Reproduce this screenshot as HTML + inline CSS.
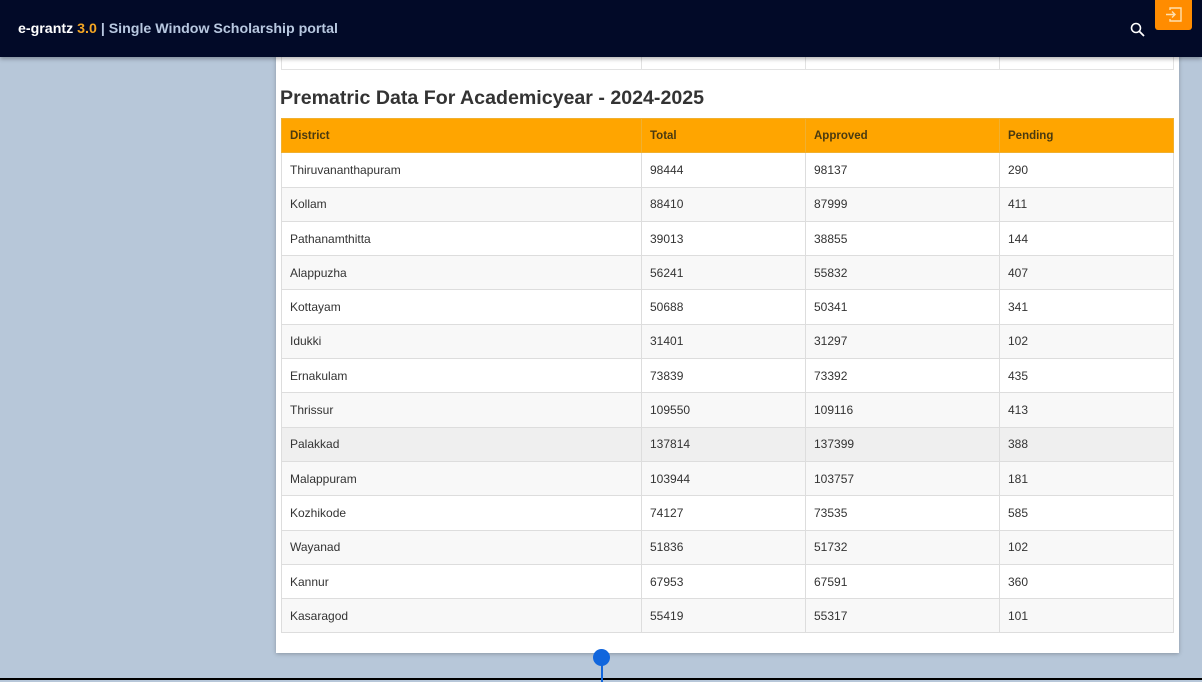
<!DOCTYPE html>
<html><head><meta charset="utf-8"><style>
*{box-sizing:border-box;margin:0;padding:0}
body{width:1202px;height:682px;overflow:hidden;background:#b7c7d9;font-family:"Liberation Sans",Arial,sans-serif;position:relative}
.hdr{position:absolute;left:0;top:0;width:1202px;height:57px;background:#020a28;box-shadow:0 2px 4px rgba(0,0,0,.3);z-index:5}
.brand{position:absolute;left:18px;top:21px;font-size:14.2px;font-weight:bold;color:#fff}
.brand .v{color:#f5a623}.brand .s{color:#b8c8e0}
.card{position:absolute;left:276px;top:40px;width:903px;height:613px;background:#fff;box-shadow:0 1px 4px rgba(0,0,0,.25)}
.prev{position:absolute;left:281px;top:40px;width:893px;height:30px;border:1px solid #e2e2e2;border-top:none}
.prev div{position:absolute;top:0;bottom:0;border-left:1px solid #e2e2e2}
h2{position:absolute;left:280px;top:87px;font-size:19.6px;font-weight:bold;color:#333}
table{position:absolute;left:281px;top:118px;width:893px;border-collapse:collapse;font-size:12px;color:#333}
td,th{height:34.3px;border:1px solid #ddd;padding:0 8px;text-align:left}
th{background:#ffa500;color:#4a3a10;font-weight:bold;border-color:#f0b030;font-size:11.5px}
tr:nth-child(odd) td{background:#f8f8f8}
tr.h td{background:#efefef}
.dot{position:absolute;left:593px;top:649px;width:17px;height:17px;border-radius:50%;background:#1166dd}
.ln{position:absolute;left:601px;top:664px;width:2px;height:18px;background:#1166dd}
.bl{position:absolute;left:0;top:678px;width:1202px;height:2px;background:#000}
.btn{position:absolute;left:1155px;top:0;width:37px;height:30px;background:#ff8c00;border-radius:0 0 3px 3px;z-index:6}
</style></head><body>
<div class="card"></div>
<div class="prev"><div style="left:359px"></div><div style="left:523px"></div><div style="left:717px"></div></div>
<div class="hdr">
<div class="brand">e-grantz <span class="v">3.0</span> <span class="s">| Single Window Scholarship portal</span></div>
<svg style="position:absolute;left:1130px;top:22px" width="16" height="16" viewBox="0 0 16 16"><circle cx="6" cy="6" r="4.5" fill="none" stroke="#fff" stroke-width="1.6"/><path d="M9.5 9.5L14 14" stroke="#fff" stroke-width="1.8"/></svg>
</div>
<div class="btn"><svg style="position:absolute;left:10px;top:7px" width="17" height="15" viewBox="0 0 17 15"><path d="M5 3V1h11v13H5v-2" fill="none" stroke="#fde0b0" stroke-width="1.4"/><path d="M1 7.5h9M7 4.5l3 3-3 3" fill="none" stroke="#fde0b0" stroke-width="1.4"/></svg></div>
<h2>Prematric Data For Academicyear - 2024-2025</h2>
<table>
<colgroup><col style="width:360px"><col style="width:164px"><col style="width:194px"><col></colgroup>
<tr><th>District</th><th>Total</th><th>Approved</th><th>Pending</th></tr>
<tr><td>Thiruvananthapuram</td><td>98444</td><td>98137</td><td>290</td></tr>
<tr><td>Kollam</td><td>88410</td><td>87999</td><td>411</td></tr>
<tr><td>Pathanamthitta</td><td>39013</td><td>38855</td><td>144</td></tr>
<tr><td>Alappuzha</td><td>56241</td><td>55832</td><td>407</td></tr>
<tr><td>Kottayam</td><td>50688</td><td>50341</td><td>341</td></tr>
<tr><td>Idukki</td><td>31401</td><td>31297</td><td>102</td></tr>
<tr><td>Ernakulam</td><td>73839</td><td>73392</td><td>435</td></tr>
<tr><td>Thrissur</td><td>109550</td><td>109116</td><td>413</td></tr>
<tr class="h"><td>Palakkad</td><td>137814</td><td>137399</td><td>388</td></tr>
<tr><td>Malappuram</td><td>103944</td><td>103757</td><td>181</td></tr>
<tr><td>Kozhikode</td><td>74127</td><td>73535</td><td>585</td></tr>
<tr><td>Wayanad</td><td>51836</td><td>51732</td><td>102</td></tr>
<tr><td>Kannur</td><td>67953</td><td>67591</td><td>360</td></tr>
<tr><td>Kasaragod</td><td>55419</td><td>55317</td><td>101</td></tr>
</table>
<div class="bl"></div><div class="ln"></div><div class="dot"></div>
</body></html>
